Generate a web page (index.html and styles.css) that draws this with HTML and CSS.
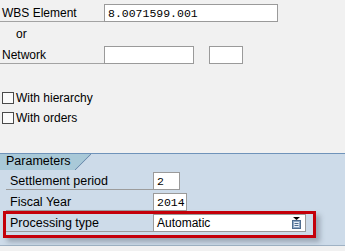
FILE: index.html
```html
<!DOCTYPE html>
<html lang="en">
<head>
    <meta charset="UTF-8">
    <meta name="viewport" content="width=device-width, initial-scale=1.0">
    <title>Settlement</title>
    <link rel="stylesheet" href="styles.css">
</head>
<body>
    <div class="top">
        <div class="row">
            <span class="lbl">WBS Element</span>
            <span class="field wbs">8.0071599.001</span>
        </div>
        <div class="or">or</div>
        <div class="row">
            <span class="lbl">Network</span>
            <span class="field net"></span>
            <span class="field act"></span>
        </div>

        <div class="checks">
            <label class="check"><span class="box"></span>With hierarchy</label>
            <label class="check"><span class="box"></span>With orders</label>
        </div>
    </div>

    <div class="panel">
        <div class="tabbar">
            <span class="tab">Parameters</span><span class="slant"></span>
        </div>
        <div class="prow">
            <span class="plbl">Settlement period</span>
            <span class="field per">2</span>
        </div>
        <div class="prow">
            <span class="plbl">Fiscal Year</span>
            <span class="field year">2014</span>
        </div>
        <div class="prow">
            <span class="plbl">Processing type</span>
            <span class="field drop">Automatic
                <svg class="f4" width="9" height="12" viewBox="0 0 9 12">
                    <path d="M1 0h7L4.5 3z" fill="#000"/>
                    <rect x="0.5" y="3.5" width="8" height="8" fill="#8fa9c6" stroke="#4f6d8f"/>
                    <rect x="2" y="5" width="5" height="5" fill="#e8eef5"/>
                    <path d="M2.5 6.5h4M2.5 8.5h4" stroke="#4f6d8f"/>
                </svg>
            </span>
        </div>
        <!-- red highlight around processing type -->
        <div class="mark"></div>
    </div>
</body>
</html>
```

FILE: styles.css
```css
*{
    margin: 0;
    padding: 0;
    box-sizing: border-box;
}
body{
    background-color: #f1f1f1;
    font-family: "Liberation Sans", Arial, sans-serif;
    font-size: 12px;
    color: #000;
}
.top{
    padding-top: 4px;
}
.row{
    display: flex;
    height: 18px;
}
.lbl{
    width: 104px;
    height: 18px;
    padding: 2px 0 0 2px;
    border-bottom: 1px solid #a3a3a3;
}
.field{
    display: flex;
    align-items: center;
    height: 18px;
    padding-left: 3px;
    background-color: #fff;
    border: 1px solid #9a9a9a;
    font-family: "Liberation Mono", monospace;
    font-size: 11.5px;
}
.wbs{
    width: 174px;
}
.net{
    width: 90px;
}
.act{
    width: 34px;
    margin-left: 15px;
}
.or{
    height: 24px;
    line-height: 24px;
    padding-left: 16px;
}
.checks{
    margin-top: 24px;
}
.check{
    display: flex;
    align-items: center;
    height: 20px;
}
.box{
    width: 12px;
    height: 12px;
    margin: 0 2px 0 2px;
    background-color: #fbfbfb;
    border: 1px solid #4a4a4a;
}
.panel{
    position: relative;
    margin-top: 25px;
    height: 93px;
    padding-bottom: 13px;
    background-color: #cddbe9;
    border-top: 1px solid #6f93ba;
    border-bottom: 1px solid #9fb2c4;
}
.tabbar{
    display: flex;
    height: 16px;
    margin-bottom: 2px;
}
.tab{
    height: 16px;
    line-height: 15px;
    padding: 0 4px 0 6px;
    background-color: #a9c9d8;
    font-size: 12.5px;
}
.slant{
    width: 16px;
    height: 16px;
    background: linear-gradient(to bottom right, #a9c9d8 calc(50% - 0.8px), #6f8faf 50%, #cddbe9 calc(50% + 0.8px));
}
.prow{
    display: flex;
    height: 18px;
    margin-bottom: 3px;
}
.plbl{
    width: 147px;
    height: 18px;
    margin-left: 6px;
    padding: 2px 0 0 4px;
    border-bottom: 1px solid #9c9c9c;
    font-size: 12.5px;
}
.per{
    width: 27px;
}
.year{
    width: 34px;
}
.drop{
    width: 153px;
    justify-content: space-between;
    padding-right: 4px;
    font-family: "Liberation Sans", Arial, sans-serif;
    font-size: 12px;
}
.mark{
    position: absolute;
    left: 3px;
    top: 57px;
    width: 313px;
    height: 27px;
    border: 3px solid #c4000a;
    box-shadow: 4px 4px 5px rgba(60, 70, 80, 0.35);
}
```
